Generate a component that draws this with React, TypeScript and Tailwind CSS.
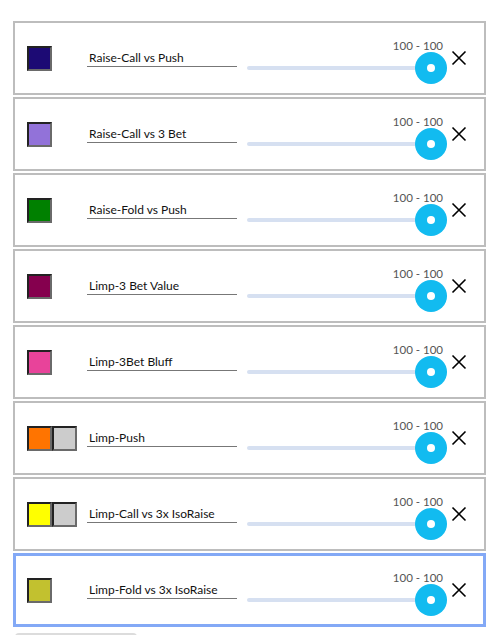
import React from "react";

type Row = { name: string; colors: string[]; active?: boolean };

const rows: Row[] = [
  { name: "Raise-Call vs Push", colors: ["#1c0a74"] },
  { name: "Raise-Call vs 3 Bet", colors: ["#9272d9"] },
  { name: "Raise-Fold vs Push", colors: ["#008000"] },
  { name: "Limp-3 Bet Value", colors: ["#85004e"] },
  { name: "Limp-3Bet Bluff", colors: ["#e8439a"] },
  { name: "Limp-Push", colors: ["#ff7400", "#cccccc"] },
  { name: "Limp-Call vs 3x IsoRaise", colors: ["#ffff00", "#cccccc"] },
  { name: "Limp-Fold vs 3x IsoRaise", colors: ["#c2c12f"], active: true },
];

function Swatch({ color }: { color: string }) {
  return (
    <div
      className="h-[25px] w-[25px] border-2 border-t-[#222] border-l-[#222] border-b-[#6a6a6a] border-r-[#6a6a6a]"
      style={{ backgroundColor: color }}
    />
  );
}

function Slider() {
  return (
    <div className="relative ml-[10px] h-[52px] w-[200px] shrink-0">
      <span className="absolute right-[4px] top-[7px] text-[11.5px] leading-[14px] text-[#555]">100 - 100</span>
      <div className="absolute left-0 top-[34px] h-[4px] w-[184px] rounded-full bg-[#d6e0f1]" />
      <div className="absolute left-[168px] top-[20px] flex h-8 w-8 items-center justify-center rounded-full bg-[#12bbf0]">
        <div className="h-[8px] w-[8px] rounded-full bg-white" />
      </div>
    </div>
  );
}

export default function App() {
  return (
    <div className="min-h-[635px] bg-white px-[13px] pt-[21px]" style={{ fontFamily: "Lato, 'Noto Sans', sans-serif" }}>
      <div className="flex flex-col gap-[2px]">
        {rows.map((row) => (
          <div
            key={row.name}
            className={
              row.active
                ? "flex h-[74px] items-center border-[3px] border-[#83a9f6] pl-[11px]"
                : "flex h-[74px] items-center border-2 border-[#bdbdbd] pl-[12px]"
            }
          >
            <div className="flex w-[60px] shrink-0">
              {row.colors.map((c, i) => (
                <Swatch key={i} color={c} />
              ))}
            </div>
            <div className="flex h-[18px] w-[150px] shrink-0 items-center border-b border-[#777] pl-[2px] pt-[1px] text-[12px] text-[#111]">
              {row.name}
            </div>
            <Slider />
            <svg className="ml-[4px] shrink-0" width="16" height="16" viewBox="0 0 16 16">
              <path d="M1.5 1.5 L14.5 14.5 M14.5 1.5 L1.5 14.5" stroke="#000" strokeWidth="1.6" fill="none" />
            </svg>
          </div>
        ))}
      </div>
      <div className="ml-[2px] mt-[6px] h-[30px] w-[122px] rounded-sm border-t-2 border-[#dcdcdc]" />
    </div>
  );
}
